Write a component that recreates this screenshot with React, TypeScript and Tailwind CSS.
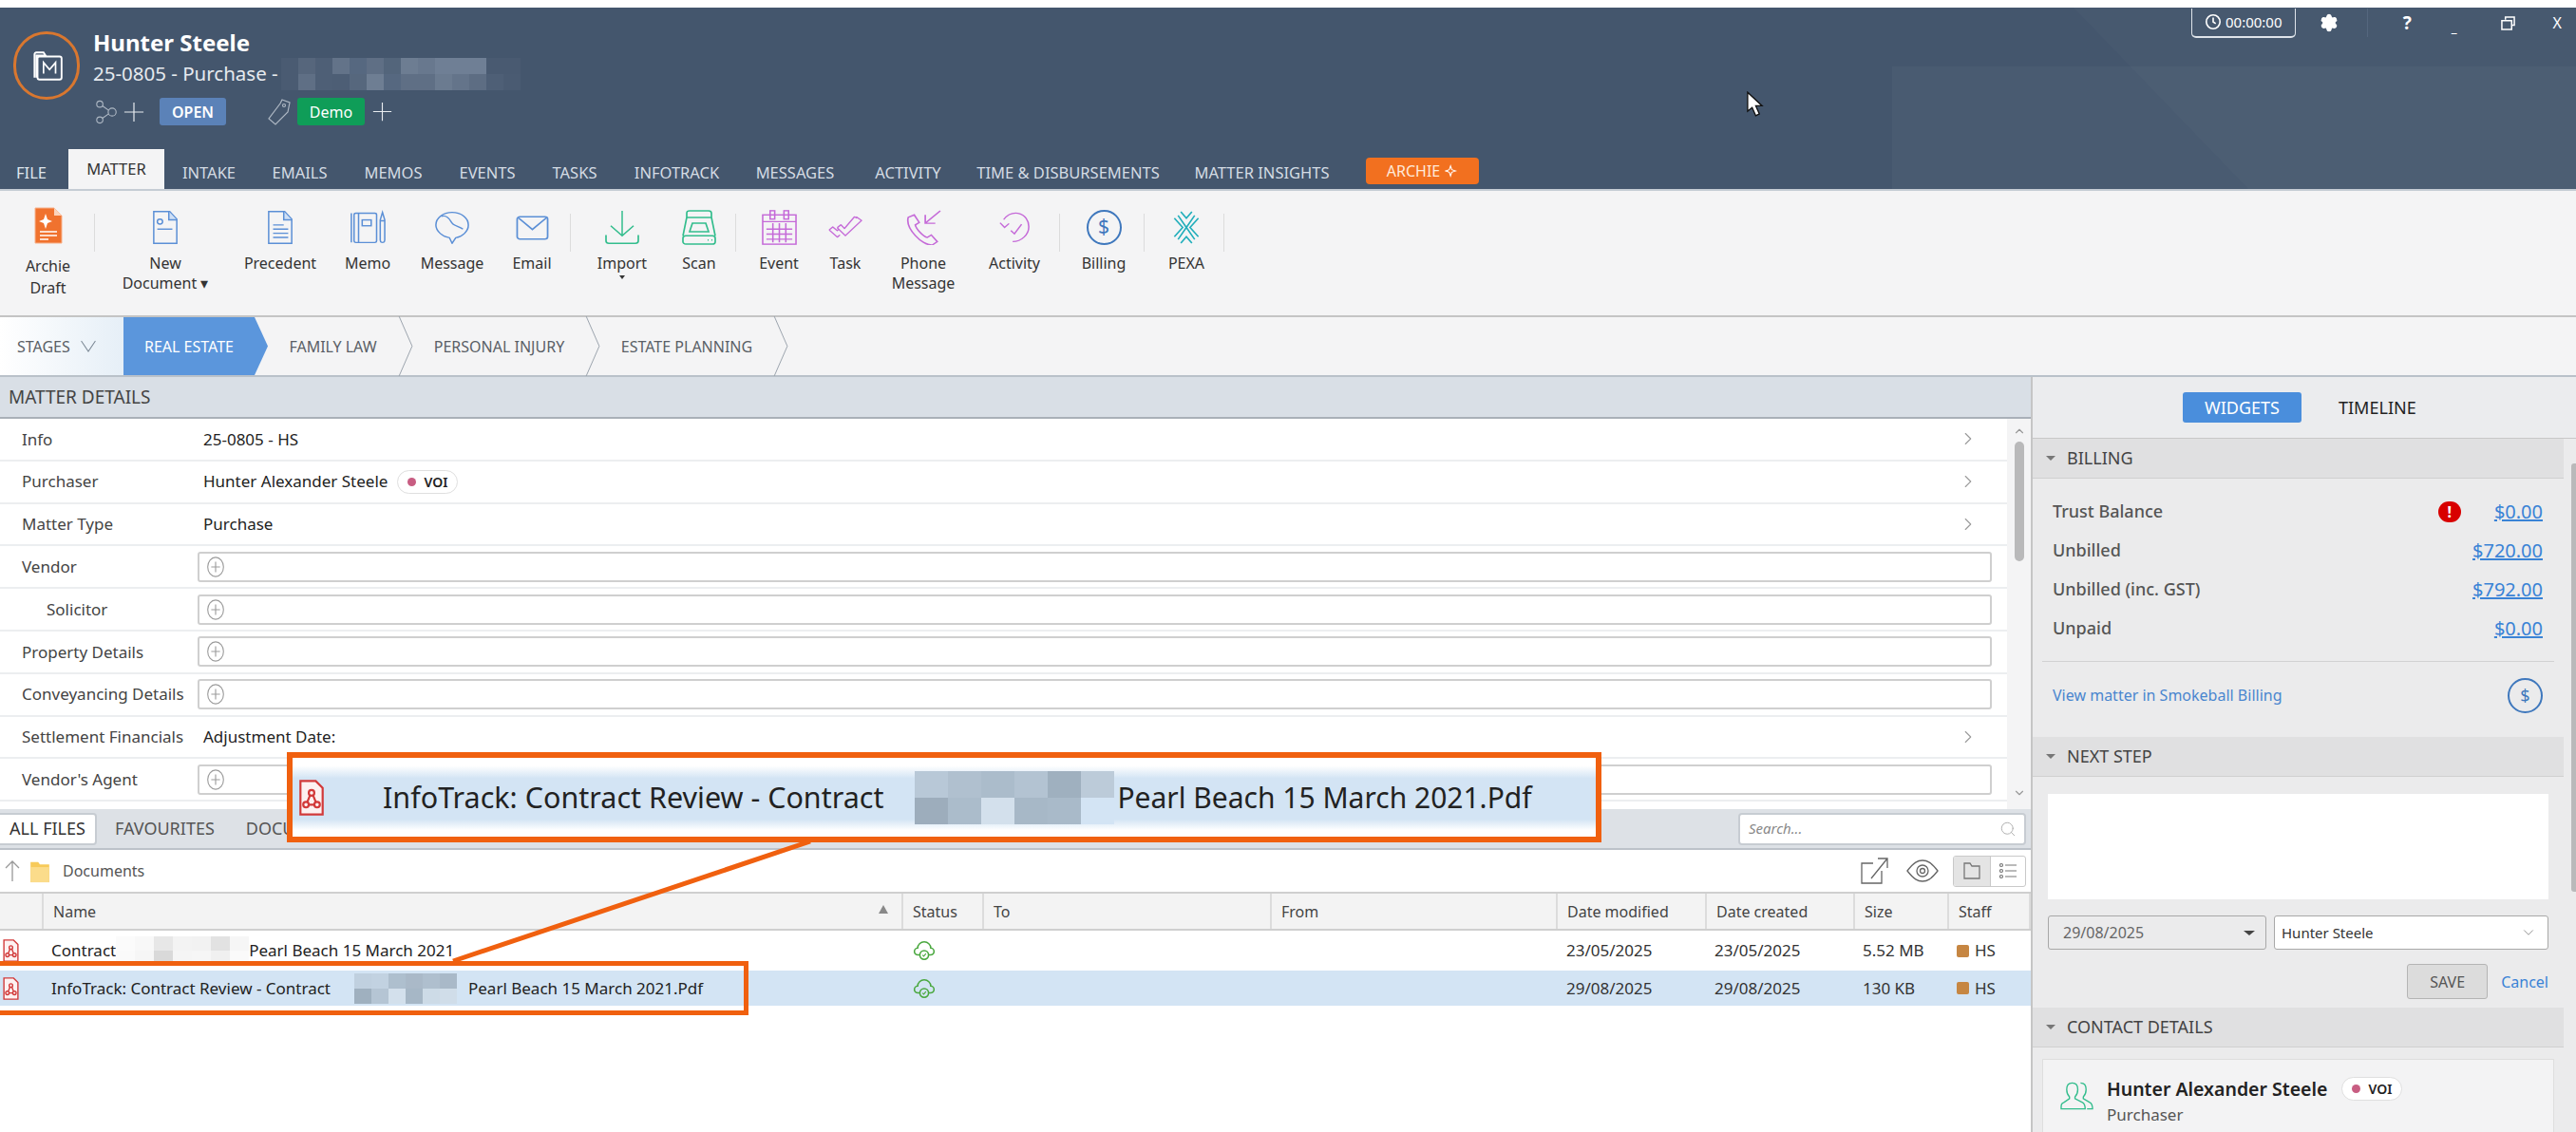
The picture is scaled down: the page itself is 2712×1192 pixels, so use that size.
import { ChevronDown, ChevronRight, ChevronUp, Search, Settings } from "lucide-react";
import type { ReactNode } from "react";

const tabs = [
  { label: "INTAKE", w: "w-[94px]" },
  { label: "EMAILS", w: "w-[97px]" },
  { label: "MEMOS", w: "w-[100px]" },
  { label: "EVENTS", w: "w-[98px]" },
  { label: "TASKS", w: "w-[86px]" },
  { label: "INFOTRACK", w: "w-[129px]" },
  { label: "MESSAGES", w: "w-[120px]" },
  { label: "ACTIVITY", w: "w-[118px]" },
  { label: "TIME & DISBURSEMENTS", w: "w-[219px]" },
  { label: "MATTER INSIGHTS", w: "w-[189px]" },
];

function Plus({ className = "" }: { className?: string }) {
  return (
    <svg viewBox="0 0 24 24" className={className} fill="none" stroke="currentColor" strokeWidth="1.3">
      <path d="M12 1v22M1 12h22" />
    </svg>
  );
}

function MatterLogo() {
  return (
    <div className="flex h-[72px] w-[70px] shrink-0 items-center justify-center rounded-full border-[3px] border-[#d9772f]">
      <svg viewBox="0 0 36 36" className="h-[38px] w-[38px]" fill="none" stroke="#fff" strokeWidth="1.8">
        <path d="M6 30V7c0-1 .6-2 2-2h7l2 3h-9v22" />
        <rect x="9" y="9" width="24" height="23" rx="2" />
        <path d="M15 26V15l6 7 6-7v11" strokeWidth="1.6" />
      </svg>
    </div>
  );
}

function Pixels({ rows, cell }: { rows: string[][]; cell: string }) {
  return (
    <div className="flex flex-col">
      {rows.map((row, i) => (
        <div key={i} className="flex">
          {row.map((c, j) => (
            <div key={j} className={`${cell} ${c}`} />
          ))}
        </div>
      ))}
    </div>
  );
}

function Archie() {
  return (
    <svg viewBox="0 0 30 40" className="-mt-[4px] h-[40px] w-[30px]">
      <path d="M1 2h20l8 8v29H1z" fill="#f0722e" stroke="#f7b28c" />
      <path d="M21 2v8h8z" fill="#fbd3bb" />
      <path d="M12 8l2 6 5 2-5 2-2 6-2-6-5-2 5-2z" fill="#fff" />
      <path d="M6 27h18M6 31h18M6 35h9" stroke="#fff" strokeWidth="1.6" />
    </svg>
  );
}

function DocIcon({ lines = false }: { lines?: boolean }) {
  return (
    <svg viewBox="0 0 30 42" preserveAspectRatio="none" className="h-[37px] w-[28px]" fill="none" stroke="#5b8fd6" strokeWidth="1.6">
      <path d="M2 2h18l8 9v29H2z" />
      <path d="M19 2v10h9" fill="#cfe0f6" />
      {lines ? (
        <path d="M7 18h12M7 23h17M7 28h17M7 33h17" />
      ) : (
        <>
          <circle cx="9" cy="14" r="3" />
          <path d="M6 23h17" />
        </>
      )}
    </svg>
  );
}

function MemoIcon() {
  return (
    <svg viewBox="0 0 40 42" preserveAspectRatio="none" className="h-[37px] w-[38px]" fill="none" stroke="#5b8fd6" strokeWidth="1.6">
      <rect x="5" y="4" width="25" height="35" rx="2" />
      <path d="M2 4v35M10 4v35" />
      <rect x="14" y="12" width="10" height="7" />
      <path d="M34 12l2.5-9 2.5 9v24a2.5 3 0 0 1-5 0zM34 13h5" />
    </svg>
  );
}

function MessageIcon() {
  return (
    <svg viewBox="0 0 40 42" preserveAspectRatio="none" className="h-[35px] w-[38px]" fill="none" stroke="#5b8fd6" strokeWidth="1.6">
      <path d="M20 2c10 0 18 7 18 16 0 8-7 15-14 16l-4 7-3-7C10 33 2 26 2 18 2 9 10 2 20 2z" />
      <path d="M8 7c5-2 9 3 11 7 2 5 8 5 13 9" />
    </svg>
  );
}

function MailIcon() {
  return (
    <svg viewBox="0 0 36 32" preserveAspectRatio="none" className="mt-[2px] h-[26px] w-[35px]" fill="none" stroke="#5b8fd6" strokeWidth="1.8">
      <rect x="1.5" y="1.5" width="33" height="29" rx="3" />
      <path d="M3 3l15 15L33 3" />
    </svg>
  );
}

function ImportIcon() {
  return (
    <svg viewBox="0 0 36 42" preserveAspectRatio="none" className="h-[37px] w-[36px]" fill="none" stroke="#33bd8d" strokeWidth="1.5">
      <path d="M18 1v30M6 19l12 12 12-12" />
      <path d="M1 30v7c0 2 1 3 3 3h28c2 0 3-1 3-3v-7" strokeWidth="1.7" />
    </svg>
  );
}

function ScanIcon() {
  return (
    <svg viewBox="0 0 36 42" preserveAspectRatio="none" className="h-[37px] w-[36px]" fill="none" stroke="#33bd8d" strokeWidth="1.7">
      <path d="M5 4c0-2 1-3 3-3h20c2 0 3 1 3 3v5H5zM5 9l-4 22M31 9l4 22" />
      <rect x="1" y="31" width="34" height="10" rx="3" />
      <path d="M11 16h14l3 10H8z" />
      <path d="M27 36h1M31 36h1" />
    </svg>
  );
}

function EventIcon() {
  return (
    <svg viewBox="0 0 38 42" preserveAspectRatio="none" className="h-[37px] w-[37px]" fill="none" stroke="#c56ad8" strokeWidth="1.6">
      <rect x="1" y="6" width="36" height="35" />
      <rect x="9" y="1" width="5" height="10" />
      <rect x="24" y="1" width="5" height="10" />
      <path d="M1 14h36M5 23h28M5 29h28M5 35h28M12 16v23M19 16v23M26 16v23" />
    </svg>
  );
}

function TaskIcon() {
  return (
    <svg viewBox="0 0 38 34" preserveAspectRatio="none" className="h-[26px] w-[36px]" fill="none" stroke="#c56ad8" strokeWidth="1.6" strokeLinejoin="round">
      <path d="M1 21l4-4 5 5 1.5-2" />
      <path d="M1 21l9 10 3-3" />
      <path d="M10 18l4-4 4 5L29 3l3 2" />
      <path d="M10 18l9 11L37 8l-6-5" />
    </svg>
  );
}

function PhoneIcon() {
  return (
    <svg viewBox="0 0 36 42" preserveAspectRatio="none" className="h-[37px] w-[38px]" fill="none" stroke="#c56ad8" strokeWidth="1.6">
      <path d="M3 9l6-3 5 9-4 3c1 5 8 14 12 15l4-3 6 8-5 4C17 43 0 22 3 9z" />
      <path d="M35 1L20 16M20 6v10h10" />
    </svg>
  );
}

function ActivityIcon() {
  return (
    <svg viewBox="0 0 36 40" preserveAspectRatio="none" className="h-[33px] w-[34px]" fill="none" stroke="#c56ad8" strokeWidth="1.6">
      <path d="M6 10C10 4 16 1 22 2c8 2 12 9 12 17 0 10-8 19-18 19" />
      <path d="M2 14l5 6 5-5" />
      <path d="M14 24l4 4 8-12" />
    </svg>
  );
}

function DollarCircle({ className = "", text = "text-[21px]" }: { className?: string; text?: string }) {
  return (
    <div className={`flex items-center justify-center rounded-full border-2 border-[#3f78bd] font-['Noto_Sans'] text-[#3f78bd] ${className} ${text}`}>
      $
    </div>
  );
}

function PexaIcon() {
  return (
    <svg viewBox="0 0 30 36" className="h-[35px] w-[30px]" fill="none" stroke="#21aebb" strokeWidth="1.7">
      <path d="M9 1l6 7 6-7M2 8l9 10-9 10M28 8l-9 10 9 10M9 35l6-7 6 7M6 5l9 13 9-13M6 31l9-13 9 13" />
    </svg>
  );
}

function ToolItem({ icon, label, w, tall = false, arrow = false }: { icon: ReactNode; label: ReactNode; w: string; tall?: boolean; arrow?: boolean }) {
  return (
    <div className={`flex shrink-0 flex-col items-center ${w}`}>
      <div className="flex h-[44px] items-center justify-center">{icon}</div>
      <div className={`text-center text-[#333] ${tall ? "mt-[8px] leading-[23px]" : "mt-[6px] leading-[21px]"}`}>{label}</div>
      {arrow && <div className="mt-[2px] h-0 w-0 border-x-[3px] border-t-[4px] border-x-transparent border-t-[#333]" />}
    </div>
  );
}

function Sep({ className = "" }: { className?: string }) {
  return <div className={`mt-[8px] h-[40px] w-px shrink-0 bg-[#dcdcdc] ${className}`} />;
}

function ChevSep() {
  return (
    <svg viewBox="0 0 16 64" className="h-[63px] w-[16px] shrink-0" fill="none" stroke="#9aa3ad" strokeWidth="1">
      <path d="M1 0l14 32L1 64" />
    </svg>
  );
}

function PlusCircle() {
  return (
    <svg viewBox="0 0 20 26" className="ml-[7px] h-[24px] w-[20px]" fill="none" stroke="#9b9b9b" strokeWidth="1.2">
      <ellipse cx="10" cy="13" rx="9" ry="11" />
      <path d="M10 7v12M5 13h10" />
    </svg>
  );
}

function DetailRow({ label, sub = false, children }: { label: string; sub?: boolean; children: ReactNode }) {
  return (
    <div className="flex h-[44.8px] items-center border-b-2 border-[#eceef0]">
      <div className={`w-[208px] shrink-0 whitespace-nowrap text-[#444] ${sub ? "pl-[49px]" : "pl-[23px]"}`}>{label}</div>
      {children}
    </div>
  );
}

function Field() {
  return (
    <div className="mr-[16px] flex h-[32px] flex-1 items-center rounded-[3px] border-2 border-[#cfcfcf] bg-white">
      <PlusCircle />
    </div>
  );
}

function RowValue({ children }: { children: ReactNode }) {
  return (
    <div className="flex flex-1 items-center pl-[6px] pr-[30px] text-[#222]">
      <div className="flex flex-1 items-center">{children}</div>
      <ChevronRight className="h-[22px] w-[22px] text-[#9a9a9a]" strokeWidth={1.2} />
    </div>
  );
}

function Voi({ className = "" }: { className?: string }) {
  return (
    <div className={`flex items-center justify-center gap-[8px] rounded-full border border-[#dfdfdf] bg-white text-[14px] font-semibold text-[#222] ${className}`}>
      <span className="h-[9px] w-[9px] rounded-full bg-[#c85d82]" />
      VOI
    </div>
  );
}

function PdfIcon({ className = "" }: { className?: string }) {
  return (
    <svg viewBox="0 0 20 26" className={className} fill="#fff" stroke="#d23a3a" strokeWidth="1.5">
      <path d="M2 1h11l5 5v19H2z" fill="#fdf1f1" />
      <circle cx="10" cy="9.5" r="2" fill="none" />
      <circle cx="6" cy="18" r="2" fill="none" />
      <circle cx="14" cy="18" r="2" fill="none" />
      <path d="M9 11l-2 5M11 11l2 5M8 18h4" fill="none" />
    </svg>
  );
}

function CloudIcon() {
  return (
    <svg viewBox="0 0 24 24" className="h-[22px] w-[24px]" fill="none" stroke="#4aa83f" strokeWidth="1.7">
      <path d="M7 17H5a4 4 0 0 1-.5-8 7.5 7 0 0 1 15 0 4 4 0 0 1-.5 8h-2" />
      <circle cx="12" cy="17" r="5" />
      <path d="M10 17l1.5 1.5L14 15.5" strokeWidth="1.2" />
    </svg>
  );
}

const row1Px = [
  ["bg-[#fbfbfb]", "bg-[#f8f8f8]", "bg-[#e7e7e7]", "bg-[#f3f3f3]", "bg-[#f2f2f2]", "bg-[#e2e2e2]", "bg-[#f6f6f6]"],
  ["bg-[#fafafa]", "bg-[#f6f6f6]", "bg-[#d9d9d9]", "bg-[#f5f5f5]", "bg-[#f6f6f6]", "bg-[#f0f0f0]", "bg-[#fafafa]"],
];
const row2Px = [
  ["bg-[#c0d0df]", "bg-[#c2d2e1]", "bg-[#aebfce]", "bg-[#aab9c8]", "bg-[#afbfce]", "bg-[#a9b9c8]"],
  ["bg-[#9fb0bf]", "bg-[#b5c5d4]", "bg-[#d3e0ec]", "bg-[#a6b7c6]", "bg-[#cddbe7]", "bg-[#d0dde9]"],
];
const bigPx = [
  ["bg-[#b8c8d7]", "bg-[#b0c0cf]", "bg-[#abbccb]", "bg-[#b3c3d2]", "bg-[#9fb0bf]", "bg-[#bccbd9]"],
  ["bg-[#9dadbc]", "bg-[#abbccb]", "bg-[#d3e0ec]", "bg-[#a7b8c7]", "bg-[#a9bac9]", "bg-[#d3e4f4]"],
];
const headPx = [
  ["bg-[#4a5b72]", "bg-[#56667c]", "bg-[#4e5f76]", "bg-[#637389]", "bg-[#566880]", "bg-[#5f6f85]", "bg-[#53657b]", "bg-[#6d7d92]", "bg-[#68788e]", "bg-[#6f7f95]", "bg-[#6f7f95]", "bg-[#6f7f95]", "bg-[#495a71]", "bg-[#495a71]"],
  ["bg-[#4a5b72]", "bg-[#5f6f85]", "bg-[#4e5f76]", "bg-[#4d5e75]", "bg-[#56677d]", "bg-[#6e7e93]", "bg-[#566880]", "bg-[#5f6f85]", "bg-[#5f6f85]", "bg-[#6b7b90]", "bg-[#64748a]", "bg-[#5d6d83]", "bg-[#4e5f76]", "bg-[#4a5b72]"],
];

const columns = [
  { label: "", w: "w-[46px]" },
  { label: "Name", w: "w-[905px]" },
  { label: "Status", w: "w-[85px]" },
  { label: "To", w: "w-[303px]" },
  { label: "From", w: "w-[301px]" },
  { label: "Date modified", w: "w-[157px]" },
  { label: "Date created", w: "w-[156px]" },
  { label: "Size", w: "w-[99px]" },
  { label: "Staff", w: "w-[86px]" },
];

function FileRow({ selected = false, name, modified, size }: { selected?: boolean; name: ReactNode; modified: string; size: string }) {
  return (
    <div className={`flex items-center text-[17px] ${selected ? "h-[37px] bg-[#d3e4f4]" : "h-[42px]"}`}>
      <div className="flex w-[54px] shrink-0 pl-[2px]">
        <PdfIcon className="h-[24px] w-[19px]" />
      </div>
      <div className="flex w-[907px] shrink-0 items-center whitespace-nowrap text-[#222]">{name}</div>
      <div className="w-[688px] shrink-0">
        <CloudIcon />
      </div>
      <div className="w-[156px] shrink-0">{modified}</div>
      <div className="w-[156px] shrink-0">{modified}</div>
      <div className="w-[99px] shrink-0">{size}</div>
      <div className="flex items-center gap-[6px]">
        <span className="h-[13px] w-[13px] rounded-[2px] bg-[#c68642]" />
        HS
      </div>
    </div>
  );
}

function WidgetHeader({ label }: { label: string }) {
  return (
    <div className="flex h-[42px] items-center border-b border-[#d0d0d0] bg-[#e0e0e1] pl-[14px] text-[#444]">
      <span className="h-0 w-0 border-x-[5px] border-t-[5px] border-x-transparent border-t-[#777]" />
      <span className="ml-[12px] text-[18px]">{label}</span>
    </div>
  );
}

function BillingRow({ label, amount, alert = false }: { label: string; amount: string; alert?: boolean }) {
  return (
    <div className="flex h-[41px] items-center pl-[21px] pr-[22px]">
      <span className="flex-1 text-[18px] font-medium text-[#555]">{label}</span>
      {alert && (
        <span className="mr-[35px] flex h-[22px] w-[24px] items-center justify-center rounded-full bg-[#d80000] text-[16px] font-bold text-white">!</span>
      )}
      <span className="text-[20px] text-[#3a83d6] underline">{amount}</span>
    </div>
  );
}

export default function App() {
  return (
    <div className="relative h-[1192px] w-[2712px] overflow-hidden bg-white pt-[8px] font-['Noto_Sans',sans-serif] text-[16px] text-[#333]">
      {/* matter header */}
      <header className="relative h-[193px] overflow-hidden border-b-2 border-[#c5ccd4] bg-[#44566d]">
        <svg viewBox="0 0 720 192" className="absolute right-0 top-0 h-[192px] w-[720px]" fill="#fff">
          <path d="M0 62h720v130H0z" opacity="0.03" />
          <path d="M191 0h529v192H376z" opacity="0.02" />
        </svg>
        <div className="relative flex h-[149px] pl-[14px] pt-[25px]">
          <MatterLogo />
          <div className="ml-[14px] flex flex-col text-white">
            <div className="-mt-[3px] text-[24px] font-bold leading-[30px]">Hunter Steele</div>
            <div className="mt-[1px] flex h-[33px] items-center text-[20.5px] text-[#e6eaef]">
              25-0805 - Purchase -
              <div className="ml-[3px]">
                <Pixels rows={headPx} cell="h-[17px] w-[18px]" />
              </div>
            </div>
            <div className="mt-[9px] flex h-[29px] items-center">
              <svg viewBox="0 0 26 28" className="ml-[2px] h-[26px] w-[25px]" fill="none" stroke="#aeb8c4" strokeWidth="1.2">
                <circle cx="5" cy="5" r="3.5" />
                <circle cx="5" cy="23" r="3.5" />
                <circle cx="19" cy="14" r="4.5" />
                <path d="M8 7l7 5M8 21l7-5" />
              </svg>
              <Plus className="ml-[5px] h-[22px] w-[22px] text-[#e8ecf0]" />
              <div className="ml-[16px] flex h-[29px] w-[70px] items-center justify-center rounded-[3px] bg-[#5b82b8] text-[16px] font-semibold">OPEN</div>
              <svg viewBox="0 0 24 28" className="ml-[44px] h-[28px] w-[24px]" fill="none" stroke="#aeb8c4" strokeWidth="1.2">
                <path d="M15 1l8 3-2 10L8 27l-7-6L13 5z" />
                <circle cx="17" cy="7" r="1.5" />
              </svg>
              <div className="ml-[7px] flex h-[29px] w-[71px] items-center justify-center rounded-[3px] bg-[#0f9d58] text-[16px]">Demo</div>
              <Plus className="ml-[8px] h-[21px] w-[21px] text-[#e8ecf0]" />
            </div>
          </div>
        </div>
        <div className="absolute right-[15px] top-0 flex h-[32px] items-center text-white">
          <div className="flex h-[31px] w-[110px] items-center justify-center gap-[4px] rounded-b-[5px] border-x border-b-2 border-[#dfe4ea] text-[15px]">
            <svg viewBox="0 0 20 20" className="h-[18px] w-[18px]" fill="none" stroke="#fff" strokeWidth="1.8">
              <circle cx="10" cy="10" r="8" />
              <path d="M10 5v5l3 2" />
            </svg>
            00:00:00
          </div>
          <Settings className="ml-[25px] h-[20px] w-[20px] fill-white text-white" />
          <div className="ml-[30px] h-[30px] w-px bg-[#55677e]" />
          <span className="ml-[37px] text-[19px] font-bold">?</span>
          <span className="ml-[42px] mt-[8px] text-[14px] font-bold">_</span>
          <svg viewBox="0 0 16 16" className="ml-[46px] h-[15px] w-[15px]" fill="none" stroke="#fff" strokeWidth="1.6">
            <path d="M5 4V1h10v9h-3M1 5h11v10H1z" />
          </svg>
          <span className="ml-[40px] text-[16px]">X</span>
        </div>
        <nav className="relative flex h-[43px] items-end text-[16.5px]">
          <div className="flex h-[36px] w-[72px] shrink-0 items-center pl-[17px] text-[#dfe5ec]">FILE</div>
          <div className="flex h-[43px] w-[101px] shrink-0 items-center justify-center bg-[#f4f4f5] text-[#333]">MATTER</div>
          {tabs.map((t) => (
            <div key={t.label} className={`flex h-[36px] shrink-0 items-center justify-center whitespace-nowrap text-[#d5dce4] ${t.w}`}>
              {t.label}
            </div>
          ))}
          <div className="mb-[6px] ml-[15px] flex h-[28px] w-[119px] items-center justify-center gap-[5px] rounded-[4px] bg-[#f2701f] text-[16px] text-[#ffe9d9]">
            ARCHIE
            <svg viewBox="0 0 16 16" className="h-[14px] w-[14px]" fill="none" stroke="#fff" strokeWidth="1.2">
              <path d="M7 2l1.5 4.5L13 8l-4.5 1.5L7 14l-1.5-4.5L1 8l4.5-1.5z" />
            </svg>
          </div>
        </nav>
      </header>

      {/* ribbon */}
      <div className="flex h-[133px] border-b-2 border-[#c4c4c4] bg-[#f4f4f5] pl-[2px] pt-[16px] text-[16px]">
        <ToolItem w="w-[97px]" icon={<Archie />} tall label={<>Archie<br />Draft</>} />
        <Sep />
        <ToolItem
          w="w-[148px]"
          icon={<DocIcon />}
          label={
            <>
              New
              <br />
              Document ▾
            </>
          }
        />
        <ToolItem w="w-[94px]" icon={<DocIcon lines />} label="Precedent" />
        <ToolItem w="w-[90px]" icon={<MemoIcon />} label="Memo" />
        <ToolItem w="w-[88px]" icon={<MessageIcon />} label="Message" />
        <ToolItem w="w-[80px]" icon={<MailIcon />} label="Email" />
        <Sep />
        <ToolItem w="w-[108px]" icon={<ImportIcon />} label="Import" arrow />
        <ToolItem w="w-[54px]" icon={<ScanIcon />} label="Scan" />
        <Sep className="ml-[11px]" />
        <ToolItem w="w-[90px]" icon={<EventIcon />} label="Event" />
        <ToolItem w="w-[50px]" icon={<TaskIcon />} label="Task" />
        <ToolItem w="w-[114px]" icon={<PhoneIcon />} label={<>Phone<br />Message</>} />
        <ToolItem w="w-[78px]" icon={<ActivityIcon />} label="Activity" />
        <Sep className="ml-[8px] mr-[4px]" />
        <ToolItem w="w-[84px]" icon={<DollarCircle className="h-[37px] w-[37px]" />} label="Billing" />
        <Sep className="mr-[5px]" />
        <ToolItem w="w-[78px]" icon={<PexaIcon />} label="PEXA" />
        <Sep />
      </div>

      {/* stages */}
      <div className="flex h-[63px] items-center border-b-2 border-[#b9c1c9] bg-[#f4f4f5] text-[16px] text-[#5a5f66]">
        <div className="flex h-full w-[130px] shrink-0 items-center gap-[10px] bg-[linear-gradient(90deg,#ffffff,#e6eff7)] pl-[18px]">
          STAGES
          <svg viewBox="0 0 18 14" className="h-[13px] w-[18px]" fill="none" stroke="#7a8794" strokeWidth="1.1">
            <path d="M1 1l8 12 8-12" />
          </svg>
        </div>
        <div className="flex h-full w-[152px] shrink-0 items-center bg-[#5b96dc] pl-[22px] text-white [clip-path:polygon(0_0,138px_0,100%_50%,138px_100%,0_100%)]">
          REAL ESTATE
        </div>
        <div className="flex w-[137px] shrink-0 justify-center whitespace-nowrap">FAMILY LAW</div>
        <ChevSep />
        <div className="flex w-[181px] shrink-0 justify-center whitespace-nowrap">PERSONAL INJURY</div>
        <ChevSep />
        <div className="flex w-[182px] shrink-0 justify-center whitespace-nowrap">ESTATE PLANNING</div>
        <ChevSep />
      </div>

      <div className="flex h-[795px]">
        {/* left column */}
        <main className="flex w-[2138px] shrink-0 flex-col text-[17px]">
          <div className="flex h-[44px] shrink-0 items-center border-b-2 border-[#a9b0b8] bg-[#d9dfe6] pl-[9px] text-[19px] text-[#444]">MATTER DETAILS</div>
          <div className="flex h-[411px] shrink-0 overflow-hidden">
            <div className="flex-1">
              <DetailRow label="Info">
                <RowValue>25-0805 - HS</RowValue>
              </DetailRow>
              <DetailRow label="Purchaser">
                <RowValue>
                  Hunter Alexander Steele
                  <Voi className="ml-[10px] h-[25px] w-[64px]" />
                </RowValue>
              </DetailRow>
              <DetailRow label="Matter Type">
                <RowValue>Purchase</RowValue>
              </DetailRow>
              <DetailRow label="Vendor">
                <Field />
              </DetailRow>
              <DetailRow label="Solicitor" sub>
                <Field />
              </DetailRow>
              <DetailRow label="Property Details">
                <Field />
              </DetailRow>
              <DetailRow label="Conveyancing Details">
                <Field />
              </DetailRow>
              <DetailRow label="Settlement Financials">
                <RowValue>Adjustment Date:</RowValue>
              </DetailRow>
              <DetailRow label="Vendor's Agent">
                <Field />
              </DetailRow>
            </div>
            <div className="flex w-[25px] shrink-0 flex-col items-center bg-[#f4f4f5] pt-[6px] pb-[10px]">
              <ChevronUp className="h-[14px] w-[14px] text-[#999]" />
              <div className="mt-[4px] h-[126px] w-[10px] rounded-full bg-[#b9b9ba]" />
              <ChevronDown className="mt-auto h-[14px] w-[14px] text-[#999]" />
            </div>
          </div>
          <div className="flex h-[43px] shrink-0 items-center border-b-2 border-[#bcc2c9] bg-[#dde1e6] pr-[5px] text-[18px] text-[#555]">
            <div className="flex h-[34px] w-[102px] items-center justify-center rounded-r-[4px] border-2 border-l-0 border-[#c7ccd2] bg-white text-[#333]">ALL FILES</div>
            <div className="ml-[19px]">FAVOURITES</div>
            <div className="ml-[33px]">DOCUMENTS</div>
            <div className="ml-auto flex h-[34px] w-[303px] items-center rounded-[4px] border-2 border-[#c7ccd2] bg-white pl-[9px] pr-[8px] text-[15px] italic text-[#888]">
              <span className="flex-1">Search...</span>
              <Search className="h-[18px] w-[18px] text-[#aaa]" strokeWidth={1.2} />
            </div>
          </div>
          <div className="flex h-[44px] shrink-0 items-center pl-[5px] pr-[5px] text-[16px] text-[#555]">
            <svg viewBox="0 0 16 24" className="h-[24px] w-[16px]" fill="none" stroke="#999" strokeWidth="1.3">
              <path d="M8 23V2M1 9l7-7 7 7" />
            </svg>
            <svg viewBox="0 0 24 28" className="ml-[9px] h-[25px] w-[24px]">
              <path d="M1 3h9l2 3h11v21H1z" fill="#f7ca5a" />
              <path d="M1 9h22v18H1z" fill="#fbdc8b" />
            </svg>
            <span className="ml-[12px]">Documents</span>
            <svg viewBox="0 0 30 28" className="ml-auto h-[28px] w-[30px]" fill="none" stroke="#666" strokeWidth="1.3">
              <path d="M14 6H2v21h21V14M29 1L12 22M19 1h10v10" />
            </svg>
            <svg viewBox="0 0 34 24" className="ml-[19px] h-[24px] w-[34px]" fill="none" stroke="#666" strokeWidth="1.3">
              <path d="M1 12C8 3 12 1 17 1s9 2 16 11c-7 9-11 11-16 11S8 21 1 12z" />
              <circle cx="17" cy="12" r="6" />
              <circle cx="17" cy="12" r="2.5" />
            </svg>
            <div className="ml-[15px] flex h-[33px] w-[77px] overflow-hidden rounded-[3px] border border-[#c9c9c9]">
              <div className="flex w-[39px] items-center justify-center border-r border-[#c9c9c9] bg-[#e4e4e4]">
                <svg viewBox="0 0 18 18" className="h-[18px] w-[18px]" fill="none" stroke="#777" strokeWidth="1.3">
                  <path d="M1 1h6l2 3h8v13H1z" />
                </svg>
              </div>
              <div className="flex flex-1 items-center justify-center">
                <svg viewBox="0 0 18 18" className="h-[18px] w-[18px]" fill="none" stroke="#777" strokeWidth="1.2">
                  <circle cx="2" cy="3" r="1.5" />
                  <circle cx="2" cy="9" r="1.5" />
                  <circle cx="2" cy="15" r="1.5" />
                  <path d="M6 3h12M6 9h12M6 15h12" />
                </svg>
              </div>
            </div>
          </div>
          <div className="flex h-[41px] shrink-0 border-y-2 border-[#cfcfcf] bg-[#f3f3f3] text-[16px] text-[#444]">
            {columns.map((c) => (
              <div key={c.label} className={`relative flex shrink-0 items-center border-r-2 border-[#dcdcdc] pl-[10px] ${c.w}`}>
                {c.label}
                {c.label === "Name" && (
                  <span className="absolute right-[14px] top-[12px] h-0 w-0 border-x-[5px] border-b-[9px] border-x-transparent border-b-[#888]" />
                )}
              </div>
            ))}
          </div>
          <FileRow
            modified="23/05/2025"
            size="5.52 MB"
            name={
              <>
                Contract
                <Pixels rows={row1Px} cell="h-[15px] w-[20px]" />
                Pearl Beach 15 March 2021
              </>
            }
          />
          <FileRow
            selected
            modified="29/08/2025"
            size="130 KB"
            name={
              <>
                InfoTrack: Contract Review - Contract
                <div className="ml-[25px] mr-[12px]">
                  <Pixels rows={row2Px} cell="h-[16px] w-[18px]" />
                </div>
                Pearl Beach 15 March 2021.Pdf
              </>
            }
          />
        </main>

        {/* widgets */}
        <aside className="flex min-w-0 flex-1 flex-col border-l-2 border-[#c5c5c5] bg-[#ebebec] text-[16px]">
          <div className="flex h-[65px] shrink-0 items-center border-b border-[#c8c8c8] bg-[#ebecee] pl-[158px] text-[18px]">
            <div className="flex h-[32px] w-[125px] items-center justify-center rounded-[3px] bg-[#4a8edc] text-white">WIDGETS</div>
            <div className="ml-[39px] text-[#222]">TIMELINE</div>
          </div>
          <div className="flex min-h-0 flex-1">
            <div className="w-[559px] shrink-0 overflow-hidden">
              <WidgetHeader label="BILLING" />
              <div className="pt-[14px]">
                <BillingRow label="Trust Balance" amount="$0.00" alert />
                <BillingRow label="Unbilled" amount="$720.00" />
                <BillingRow label="Unbilled (inc. GST)" amount="$792.00" />
                <BillingRow label="Unpaid" amount="$0.00" />
              </div>
              <div className="mx-[10px] mt-[14px] h-px bg-[#d2d2d2]" />
              <div className="mb-[9px] flex h-[70px] items-center pl-[21px] pr-[22px] text-[16px] text-[#4a86cf]">
                <span className="flex-1">View matter in Smokeball Billing</span>
                <DollarCircle className="h-[37px] w-[37px]" text="text-[18px]" />
              </div>
              <WidgetHeader label="NEXT STEP" />
              <div className="mx-[16px] mt-[18px] h-[111px] bg-white" />
              <div className="mx-[16px] mt-[17px] flex h-[36px] gap-[8px]">
                <div className="flex w-[230px] items-center rounded-[3px] border border-[#a8a8a8] pl-[15px] pr-[11px] text-[#666]">
                  <span className="flex-1">29/08/2025</span>
                  <span className="h-0 w-0 border-x-[6px] border-t-[5px] border-x-transparent border-t-[#444]" />
                </div>
                <div className="flex flex-1 items-center rounded-[3px] border border-[#a8a8a8] bg-white pl-[7px] pr-[11px] text-[15px] text-[#333]">
                  <span className="flex-1">Hunter Steele</span>
                  <ChevronDown className="h-[18px] w-[18px] text-[#888]" strokeWidth={1.2} />
                </div>
              </div>
              <div className="mx-[16px] mt-[15px] flex h-[37px] items-center justify-end">
                <div className="flex h-[37px] w-[85px] items-center justify-center rounded-[3px] border border-[#b4b4b4] bg-[#dcdcdc] text-[#555]">SAVE</div>
                <div className="ml-[14px] text-[#3a83d6]">Cancel</div>
              </div>
              <div className="h-[9px]" />
              <WidgetHeader label="CONTACT DETAILS" />
              <div className="mx-[10px] mt-[12px] flex h-[100px] border border-[#dedede] bg-[#f3f3f4] pl-[18px] pt-[21px]">
                <svg viewBox="0 0 36 32" className="h-[32px] w-[35px]" fill="none" stroke="#33bd8d" strokeWidth="1.4">
                  <path d="M13 3c4 0 6 3 6 7s-2 7-3 8v2l8 4c2 1 3 3 3 7H1c0-4 0-6 3-7l6-4v-2c-1-1-3-4-3-8s2-7 6-7zM22 3c4 0 6 3 6 7s-2 7-3 8v2l7 4c2 1 3 3 3 7h-6" />
                </svg>
                <div className="ml-[14px] -mt-[5px]">
                  <div className="flex items-center">
                    <span className="text-[19.5px] font-semibold text-[#222]">Hunter Alexander Steele</span>
                    <Voi className="ml-[15px] h-[25px] w-[64px]" />
                  </div>
                  <div className="text-[17px] text-[#555]">Purchaser</div>
                </div>
              </div>
            </div>
            <div className="ml-[8px] mt-[26px] h-[451px] w-[5px] shrink-0 rounded-l-[3px] bg-[#b9b9ba]" />
          </div>
        </aside>
      </div>

      {/* callouts on top of the page */}
      <div className="absolute left-[302px] top-[792px] flex h-[95px] w-[1384px] items-center border-[6px] border-[#f0600f] bg-[linear-gradient(180deg,#ffffff_10%,#d3e4f4_26%,#d3e4f4_78%,#ffffff_92%)] text-[30px] text-[#222]">
        <PdfIcon className="ml-[5px] h-[38px] w-[30px]" />
        <span className="ml-[60px] whitespace-nowrap text-[30.5px]">InfoTrack: Contract Review - Contract</span>
        <div className="ml-[33px] mr-[3px]">
          <Pixels rows={bigPx} cell="h-[28px] w-[35px]" />
        </div>
        <span className="whitespace-nowrap">Pearl Beach 15 March 2021.Pdf</span>
      </div>
      <svg viewBox="0 0 400 140" className="absolute left-[465px] top-[884px] h-[140px] w-[400px]" fill="none" stroke="#f0600f" strokeWidth="5">
        <path d="M388 2L12 128" />
      </svg>
      <div className="absolute -left-[6px] top-[1012px] h-[57px] w-[794px] border-[5px] border-[#f0600f]" />

      {/* mouse pointer */}
      <svg viewBox="0 0 20 28" className="absolute left-[1838px] top-[96px] h-[27px] w-[19px]" fill="#fff" stroke="#111" strokeWidth="1.4">
        <path d="M2 1v21l5-4 4 9 4-2-4-9h7z" />
      </svg>
    </div>
  );
}
